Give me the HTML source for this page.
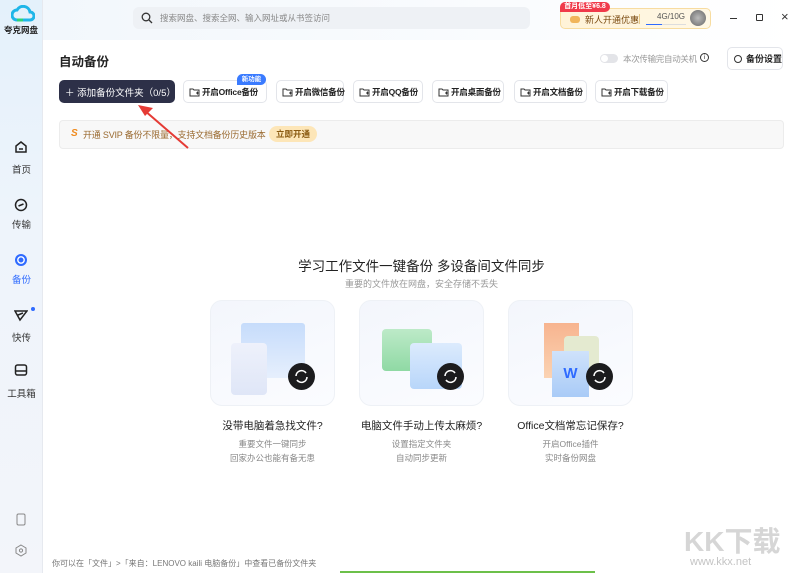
<!DOCTYPE html>
<html><head><meta charset="utf-8"><style>
*{margin:0;padding:0;box-sizing:border-box}
body{width:800px;height:573px;overflow:hidden;background:#fff;font-family:"Liberation Sans","Noto Sans CJK SC",sans-serif;position:relative;color:#222}
.abs{position:absolute}
.side{left:0;top:0;width:43px;height:573px;background:linear-gradient(180deg,#e4f1fb 0%,#eef4fb 40%,#f3f5fa 100%);border-right:1px solid #e6e9ef}
.nav{position:absolute;left:0;width:43px;text-align:center;font-size:9.5px;color:#333}
.topbg{left:43px;top:0;width:757px;height:40px;background:linear-gradient(90deg,#f2f7fc,#fff)}
.btn{position:absolute;top:80px;height:23px;border:1px solid #e3e5ea;border-radius:5px;background:#fff;font-size:8.5px;font-weight:bold;color:#222;display:flex;align-items:center;padding-left:5px;white-space:nowrap;letter-spacing:-0.2px}
.btn svg{margin-right:2px;flex-shrink:0}
.card{position:absolute;top:300px;width:125px;height:106px;border-radius:12px;background:linear-gradient(160deg,#f3f6fc,#fbfcff);border:1px solid #eef1f6}
.ct{position:absolute;top:418px;width:125px;text-align:center;font-size:10.5px;color:#222}
.cs{position:absolute;top:437px;width:125px;text-align:center;font-size:8.5px;color:#888;line-height:14px}
.sync{position:absolute;width:27px;height:27px;border-radius:50%;background:#1c1c1e;left:77px;top:62px}
</style></head><body>
<div class="abs side"></div>
<div class="abs topbg"></div>
<svg class="abs" style="left:11px;top:5px" width="24" height="17" viewBox="0 0 24 17"><path d="M6 15a5 5 0 0 1 0-10 7 7 0 0 1 13 2 4 4 0 0 1 0 8z" fill="none" stroke="#1fb6e8" stroke-width="3"/><path d="M6 15h6" stroke="#2dd27a" stroke-width="3"/></svg>
<div class="abs" style="left:4px;top:24px;font-size:8.5px;font-weight:bold;color:#222">夸克网盘</div>
<svg class="abs" style="left:14px;top:140px" width="14" height="14" viewBox="0 0 14 14"><path d="M2 6l5-4 5 4v6H2z" fill="none" stroke="#222" stroke-width="1.5"/><path d="M5 9h4" stroke="#222" stroke-width="1.5"/></svg>
<div class="nav" style="top:162px">首页</div>
<svg class="abs" style="left:14px;top:198px" width="14" height="14" viewBox="0 0 14 14"><circle cx="7" cy="7" r="5.5" fill="none" stroke="#222" stroke-width="1.5"/><path d="M4.5 8l5-2" stroke="#222" stroke-width="1.5"/></svg>
<div class="nav" style="top:217px">传输</div>
<svg class="abs" style="left:14px;top:253px" width="14" height="14" viewBox="0 0 14 14"><circle cx="7" cy="7" r="6" fill="#2f6bff"/><circle cx="7" cy="7" r="3.2" fill="none" stroke="#fff" stroke-width="1.4"/></svg>
<div class="nav" style="top:272px;color:#2f6bff">备份</div>
<svg class="abs" style="left:14px;top:308px" width="14" height="14" viewBox="0 0 14 14"><path d="M1 3h12L6 12z M4 7l5-2" fill="none" stroke="#222" stroke-width="1.5"/></svg>
<div class="abs" style="left:31px;top:307px;width:4px;height:4px;border-radius:50%;background:#2f6bff"></div>
<div class="nav" style="top:330px">快传</div>
<svg class="abs" style="left:14px;top:363px" width="14" height="14" viewBox="0 0 14 14"><rect x="1.5" y="2" width="11" height="10" rx="2" fill="none" stroke="#222" stroke-width="1.5"/><path d="M2 8h10" stroke="#222" stroke-width="1.5"/></svg>
<div class="nav" style="top:386px">工具箱</div>
<svg class="abs" style="left:16px;top:513px" width="10" height="13" viewBox="0 0 10 13"><rect x="1" y="1" width="8" height="11" rx="1.5" fill="none" stroke="#888"/></svg>
<svg class="abs" style="left:15px;top:544px" width="12" height="13" viewBox="0 0 12 13"><path d="M6 1l5 3v5l-5 3-5-3V4z" fill="none" stroke="#888"/><circle cx="6" cy="6.5" r="1.6" fill="none" stroke="#888"/></svg>
<div class="abs" style="left:133px;top:7px;width:397px;height:22px;border-radius:6px;background:#eef1f5"></div>
<svg class="abs" style="left:141px;top:12px" width="12" height="12" viewBox="0 0 12 12"><circle cx="5" cy="5" r="3.8" fill="none" stroke="#333" stroke-width="1.3"/><path d="M8 8l3 3" stroke="#333" stroke-width="1.3"/></svg>
<div class="abs" style="left:160px;top:12px;font-size:8.5px;color:#888">搜索网盘、搜索全网、输入网址或从书签访问</div>
<div class="abs" style="left:560px;top:8px;width:151px;height:21px;border-radius:5px;background:linear-gradient(90deg,#fff3d8,#fff8e6);border:1px solid #f7dca0"></div>
<div class="abs" style="left:560px;top:2px;width:50px;height:10px;border-radius:5px 5px 5px 0;background:#f03a4a;color:#fff;font-size:7px;font-weight:bold;line-height:10px;text-align:center">首月低至¥6.8</div>
<div class="abs" style="left:570px;top:16px;width:10px;height:7px;border-radius:3px;background:#f1b55a"></div>
<div class="abs" style="left:585px;top:13px;font-size:9px;color:#7a4a10">新人开通优惠</div>
<div class="abs" style="left:639px;top:14px;width:1px;height:10px;background:#e7c98a"></div>
<div class="abs" style="left:657px;top:12px;font-size:8px;color:#555">4G/10G</div>
<div class="abs" style="left:646px;top:24px;width:40px;height:1px;background:#ddd"></div>
<div class="abs" style="left:646px;top:24px;width:16px;height:1px;background:#2f6bff"></div>
<div class="abs" style="left:690px;top:10px;width:16px;height:16px;border-radius:50%;background:radial-gradient(#bbb,#666)"></div>
<div class="abs" style="left:730px;top:18px;width:7px;height:1px;background:#333"></div>
<div class="abs" style="left:756px;top:14px;width:7px;height:7px;border:1.2px solid #333;border-radius:1px"></div>
<div class="abs" style="left:781px;top:9px;font-size:13px;color:#333">×</div>
<div class="abs" style="left:59px;top:51px;font-size:12.5px;font-weight:bold;color:#222">自动备份</div>
<div class="abs" style="left:600px;top:54px;width:18px;height:9px;border-radius:5px;background:#e3e4e8"></div>
<div class="abs" style="left:601px;top:55px;width:7px;height:7px;border-radius:50%;background:#fff"></div>
<div class="abs" style="left:623px;top:53px;font-size:8.5px;color:#999;letter-spacing:-0.3px">本次传输完自动关机</div>
<div class="abs" style="left:700px;top:53px;width:9px;height:9px;border:1px solid #333;border-radius:50%;font-size:6px;text-align:center;line-height:8px">i</div>
<div class="abs" style="left:727px;top:47px;width:56px;height:23px;border:1px solid #e3e5ea;border-radius:5px;font-size:9px;font-weight:bold;display:flex;align-items:center;padding-left:6px"><span style="display:inline-block;width:8px;height:8px;border:1.2px solid #333;border-radius:50%;margin-right:4px"></span>备份设置</div>
<div class="abs" style="left:59px;top:80px;width:116px;height:23px;border-radius:5px;background:#2d3048;color:#fff;font-size:9.5px;display:flex;align-items:center;padding-left:6px">＋ 添加备份文件夹（0/5）</div>
<div class="btn" style="left:183px;width:84px"><svg width="11" height="10" viewBox="0 0 11 10"><path d="M1 2h3l1 1h5v6H1z M7 6h3 M8.5 4.5v3" fill="none" stroke="#333" stroke-width="1"/></svg>开启Office备份</div>
<div class="abs" style="left:237px;top:74px;width:29px;height:11px;border-radius:6px 6px 6px 0;background:#3a7bff;color:#fff;font-size:6.5px;font-weight:bold;text-align:center;line-height:11px">新功能</div>
<div class="btn" style="left:276px;width:68px"><svg width="11" height="10" viewBox="0 0 11 10"><path d="M1 2h3l1 1h5v6H1z M7 6h3 M8.5 4.5v3" fill="none" stroke="#333" stroke-width="1"/></svg>开启微信备份</div>
<div class="btn" style="left:353px;width:70px"><svg width="11" height="10" viewBox="0 0 11 10"><path d="M1 2h3l1 1h5v6H1z M7 6h3 M8.5 4.5v3" fill="none" stroke="#333" stroke-width="1"/></svg>开启QQ备份</div>
<div class="btn" style="left:432px;width:72px"><svg width="11" height="10" viewBox="0 0 11 10"><path d="M1 2h3l1 1h5v6H1z M7 6h3 M8.5 4.5v3" fill="none" stroke="#333" stroke-width="1"/></svg>开启桌面备份</div>
<div class="btn" style="left:514px;width:73px"><svg width="11" height="10" viewBox="0 0 11 10"><path d="M1 2h3l1 1h5v6H1z M7 6h3 M8.5 4.5v3" fill="none" stroke="#333" stroke-width="1"/></svg>开启文档备份</div>
<div class="btn" style="left:595px;width:73px"><svg width="11" height="10" viewBox="0 0 11 10"><path d="M1 2h3l1 1h5v6H1z M7 6h3 M8.5 4.5v3" fill="none" stroke="#333" stroke-width="1"/></svg>开启下载备份</div>
<div class="abs" style="left:59px;top:120px;width:725px;height:29px;border-radius:4px;background:#f8f8f8;border:1px solid #ececec"></div>
<div class="abs" style="left:71px;top:128px;font-size:10px;font-weight:bold;font-style:italic;color:#f08a1c">S</div>
<div class="abs" style="left:83px;top:128px;font-size:9px;color:#9a6a30;letter-spacing:-0.2px">开通 SVIP 备份不限量，支持文档备份历史版本</div>
<div class="abs" style="left:269px;top:126px;width:48px;height:16px;border-radius:8px;background:#fde6b8;font-size:8.5px;font-weight:bold;color:#8a5a10;text-align:center;line-height:16px">立即开通</div>
<svg class="abs" style="left:130px;top:100px" width="70" height="55"><path d="M58 48L14 10" stroke="#e53b35" stroke-width="2"/><path d="M8 5l15 3-8 8z" fill="#e53b35"/></svg>
<div class="abs" style="left:0;width:843px;top:255px;text-align:center;font-size:13.5px;color:#222">学习工作文件一键备份 多设备间文件同步</div>
<div class="abs" style="left:0;width:843px;top:277px;text-align:center;font-size:9px;color:#999">重要的文件放在网盘，安全存储不丢失</div>
<div class="card" style="left:210px">
<div class="abs" style="left:30px;top:22px;width:64px;height:55px;border-radius:3px;background:linear-gradient(#c6dcfb,#e6effd)"></div>
<div class="abs" style="left:20px;top:42px;width:36px;height:52px;border-radius:4px;background:linear-gradient(#eef1fb,#dfe6f7)"></div>
<div class="sync"><svg width="27" height="27" viewBox="0 0 27 27"><path d="M8 13a5.5 5.5 0 0 1 10-3M19 14a5.5 5.5 0 0 1-10 3" fill="none" stroke="#fff" stroke-width="1.6"/></svg></div></div>
<div class="card" style="left:359px">
<div class="abs" style="left:22px;top:28px;width:50px;height:42px;border-radius:4px;background:linear-gradient(#bdeac8,#8fd9a4)"></div>
<div class="abs" style="left:50px;top:42px;width:52px;height:46px;border-radius:4px;background:linear-gradient(#dcebfd,#b8d6fa)"></div>
<div class="sync"><svg width="27" height="27" viewBox="0 0 27 27"><path d="M8 13a5.5 5.5 0 0 1 10-3M19 14a5.5 5.5 0 0 1-10 3" fill="none" stroke="#fff" stroke-width="1.6"/></svg></div></div>
<div class="card" style="left:508px">
<div class="abs" style="left:35px;top:22px;width:35px;height:55px;background:linear-gradient(#f7b48f,#fbd3b3)"></div>
<div class="abs" style="left:55px;top:35px;width:35px;height:50px;border-radius:4px;background:#e4ead0"></div>
<div class="abs" style="left:43px;top:50px;width:37px;height:46px;background:linear-gradient(#cfe2fb,#a9cbf7);color:#2f6bff;font-weight:bold;font-size:15px;text-align:center;line-height:46px">W</div>
<div class="sync"><svg width="27" height="27" viewBox="0 0 27 27"><path d="M8 13a5.5 5.5 0 0 1 10-3M19 14a5.5 5.5 0 0 1-10 3" fill="none" stroke="#fff" stroke-width="1.6"/></svg></div></div>
<div class="ct" style="left:210px">没带电脑着急找文件?</div>
<div class="cs" style="left:210px">重要文件一键同步<br>回家办公也能有备无患</div>
<div class="ct" style="left:359px">电脑文件手动上传太麻烦?</div>
<div class="cs" style="left:359px">设置指定文件夹<br>自动同步更新</div>
<div class="ct" style="left:508px">Office文档常忘记保存?</div>
<div class="cs" style="left:508px">开启Office插件<br>实时备份网盘</div>
<div class="abs" style="left:52px;top:558px;font-size:8px;color:#777">你可以在「文件」&gt;「来自：LENOVO kaili 电脑备份」中查看已备份文件夹</div>
<div class="abs" style="left:684px;top:520px;font-size:28px;font-weight:bold;color:#d6d6d6">KK下载</div>
<div class="abs" style="left:690px;top:556px;font-size:11px;color:#c4c4c4">www.kkx.net</div>
<div class="abs" style="left:340px;top:571px;width:255px;height:2px;background:#6cc04a"></div>
</body></html>
